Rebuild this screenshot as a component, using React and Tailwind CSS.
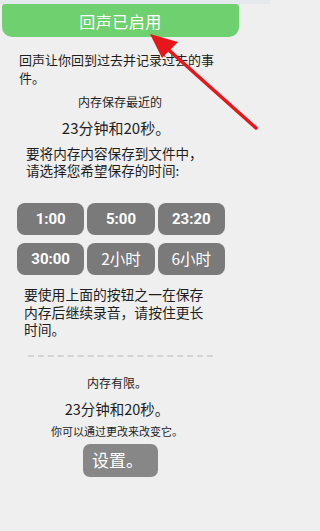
import React from "react";

const TIMES = [
  { label: "1:00", bold: true },
  { label: "5:00", bold: true },
  { label: "23:20", bold: true },
  { label: "30:00", bold: true },
  { label: "2小时", bold: false },
  { label: "6小时", bold: false },
];

function Arrow() {
  // red annotation arrow pointing at the header
  return (
    <svg
      className="absolute left-0 top-0 pointer-events-none"
      width="270"
      height="140"
      viewBox="0 0 270 140"
    >
      <line x1="256" y1="128" x2="162" y2="44" stroke="#e8161b" strokeWidth="3.5" strokeLinecap="round" />
      <polygon points="150,34 178,42 162,58" fill="#e8161b" />
    </svg>
  );
}

export default function App() {
  return (
    <div className="w-full min-h-screen bg-[#efefef]">
      <div
        className="relative w-[270px] h-[531px] bg-[#efefef] text-[#1e1e1e] overflow-hidden"
        style={{ fontFamily: '"Noto Sans CJK SC", "Noto Sans", sans-serif' }}
      >
        <div className="h-[4px] bg-[#e4e9ee]" />
        {/* Header */}
        <div className="ml-[2px] w-[237px] h-[33px] bg-[#6fd06f] rounded-b-[10px] rounded-t-[3px] flex items-center justify-center">
          <span className="text-white text-[16px] tracking-[0.5px]">回声已启用</span>
        </div>

        <p className="ml-[19px] mt-[14px] w-[200px] text-[13px] leading-[17.5px]">
          回声让你回到过去并记录过去的事件。
        </p>

        <p className="w-[240px] text-center mt-[8px] text-[12px] leading-[16px]">内存保存最近的</p>
        <p className="w-[232px] text-center mt-[8px] text-[15px] leading-[20px]">23分钟和20秒。</p>

        <p className="ml-[26px] mt-[7px] w-[190px] text-[13.6px] leading-[17px]">
          要将内存内容保存到文件中，请选择您希望保存的时间:
        </p>

        {/* Time buttons */}
        <div className="ml-[17px] mt-[24px] w-[208px] grid grid-cols-3 gap-x-[3px] gap-y-[8px]">
          {TIMES.map((t) => (
            <div
              key={t.label}
              className={`h-[32px] rounded-[8px] bg-[#7a7a7a] text-white flex items-center justify-center ${
                t.bold ? "font-bold text-[15px]" : "text-[15.5px]"
              }`}
              style={{ fontFamily: t.bold ? '"Roboto", "Noto Sans", sans-serif' : undefined }}
            >
              {t.label}
            </div>
          ))}
        </div>

        <p className="ml-[24px] mt-[11px] w-[186px] text-[13.8px] leading-[17.5px]">
          要使用上面的按钮之一在保存内存后继续录音，请按住更长时间。
        </p>

        <div className="ml-[28px] mt-[16px] w-[185px] border-t-[2px] border-dashed border-[#d4d4d4]" />

        <p className="w-[234px] text-center mt-[18px] text-[12px] leading-[16px]">内存有限。</p>
        <p className="w-[234px] text-center mt-[8px] text-[14.5px] leading-[20px]">23分钟和20秒。</p>
        <p className="w-[234px] text-center mt-[5px] text-[11px] leading-[15px]">你可以通过更改来改变它。</p>

        <div className="ml-[83px] mt-[5px] w-[75px] h-[33px] rounded-[7px] bg-[#878787] flex items-center pl-[9px]">
          <span className="text-white text-[17px]">设置。</span>
        </div>

        <Arrow />
      </div>
    </div>
  );
}
